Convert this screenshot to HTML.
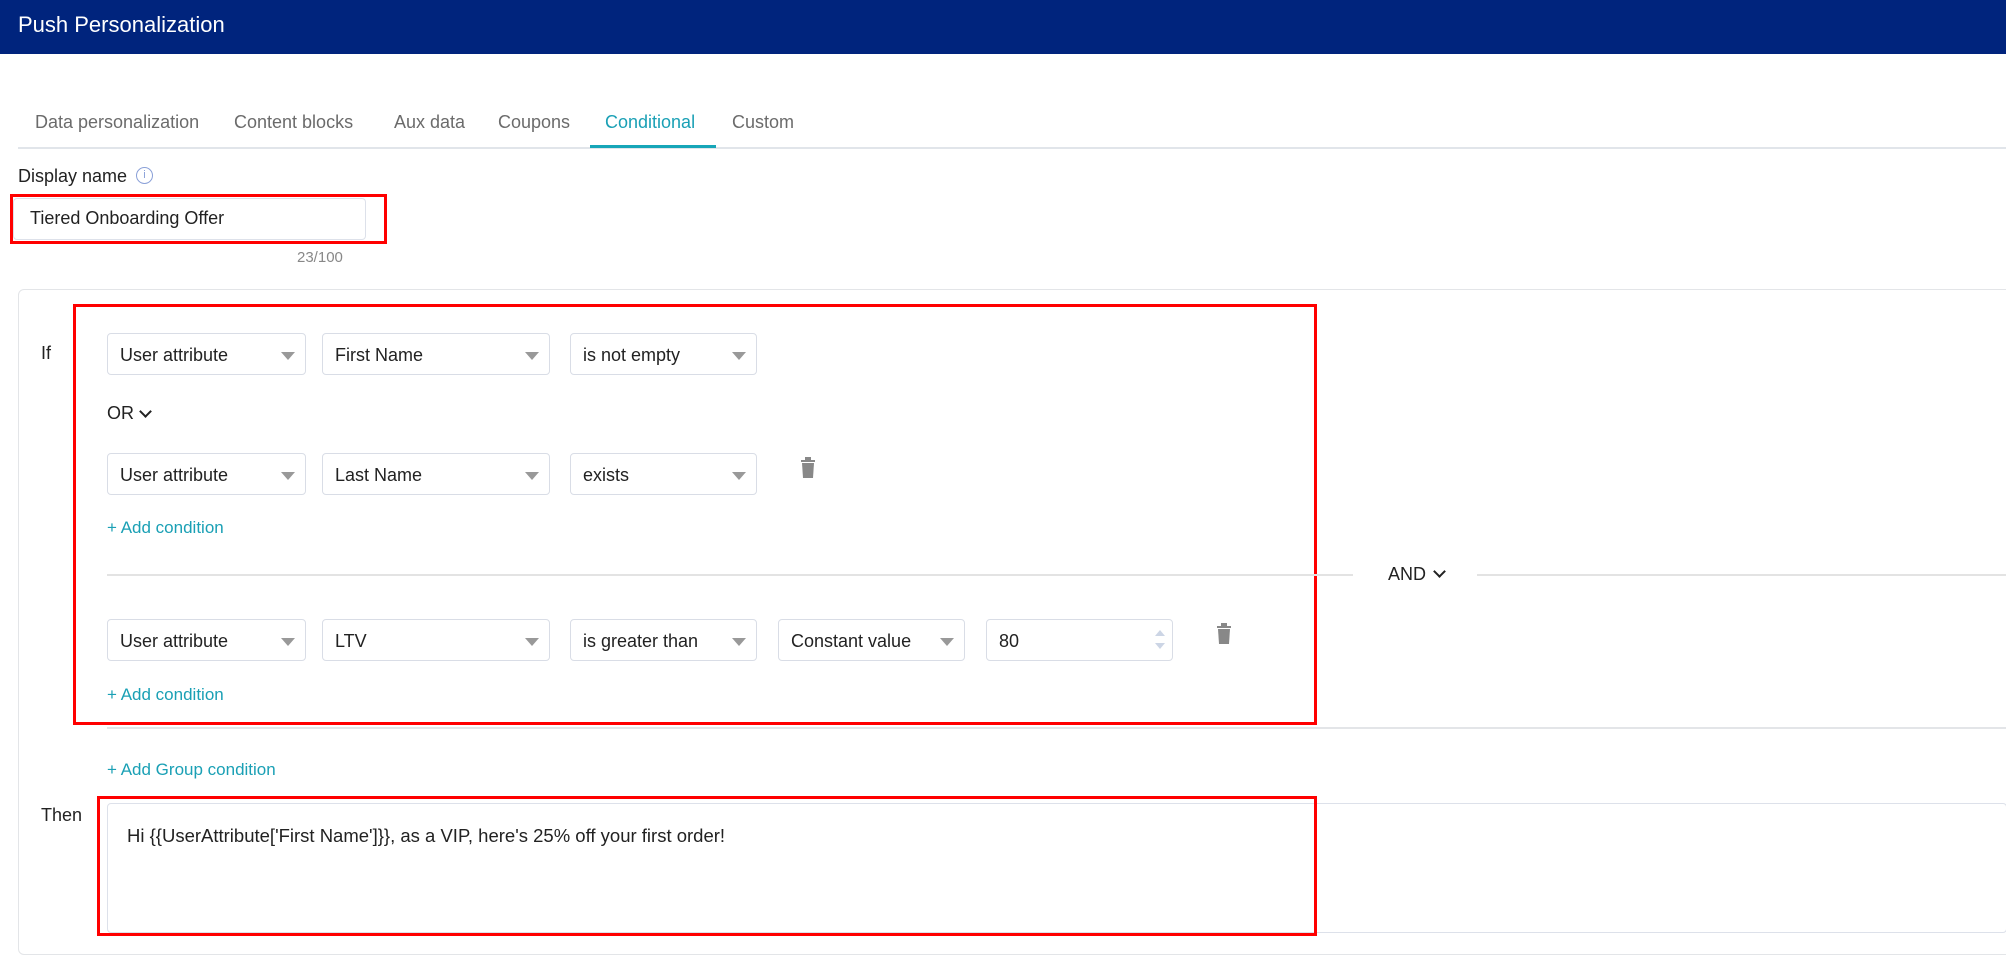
<!DOCTYPE html>
<html><head><meta charset="utf-8"><style>
*{box-sizing:border-box;margin:0;padding:0}
body{width:2006px;height:962px;background:#fff;font-family:"Liberation Sans",sans-serif;position:relative;overflow:hidden;color:#222}
.a{position:absolute}
.hdr{left:0;top:0;width:2006px;height:54px;background:#00247d;color:#fff;font-size:22px;padding:12px 0 0 18px}
.tab{top:112px;font-size:18px;color:#6b6b6b}
.sel{position:absolute;height:42px;border:1px solid #d9dde6;border-radius:4px;font-size:18px;padding:11px 0 0 12px;color:#222;background:#fff}
.sel:after{content:"";position:absolute;right:10px;top:18px;border-left:7px solid transparent;border-right:7px solid transparent;border-top:8px solid #999}
.num:after{display:none}
.red{border:3px solid #f00}
.link{color:#1aa0b5;font-size:17px}
</style></head><body>
<div class="a hdr">Push Personalization</div>
<div class="a tab" style="left:35px">Data personalization</div>
<div class="a tab" style="left:234px">Content blocks</div>
<div class="a tab" style="left:394px">Aux data</div>
<div class="a tab" style="left:498px">Coupons</div>
<div class="a tab" style="left:605px;color:#1aa0b5">Conditional</div>
<div class="a tab" style="left:732px">Custom</div>
<div class="a" style="left:18px;top:147px;width:1988px;height:2px;background:#e1e5ea"></div>
<div class="a" style="left:590px;top:145px;width:126px;height:3px;background:#17a6b8"></div>
<div class="a" style="left:18px;top:166px;font-size:18px">Display name</div>
<div class="a" style="left:136px;top:167px;width:17px;height:17px;border:1px solid #8aa0d8;border-radius:50%;color:#8aa0d8;font-size:11px;text-align:center;line-height:15px">i</div>
<div class="a" style="left:13px;top:198px;width:353px;height:42px;border:1px solid #dde1ea;border-radius:4px"></div>
<div class="a red" style="left:10px;top:194px;width:377px;height:50px"></div>
<div class="a" style="left:30px;top:208px;font-size:18px">Tiered Onboarding Offer</div>
<div class="a" style="left:297px;top:249px;font-size:15px;color:#888">23/100</div>
<div class="a" style="left:18px;top:289px;width:2000px;height:666px;border:1px solid #e3e5e8;border-radius:6px"></div>
<div class="a" style="left:41px;top:343px;font-size:18px">If</div>
<div class="a red" style="left:73px;top:304px;width:1244px;height:421px"></div>

<div class="sel" style="left:107px;top:333px;width:199px">User attribute</div>
<div class="sel" style="left:322px;top:333px;width:228px">First Name</div>
<div class="sel" style="left:570px;top:333px;width:187px">is not empty</div>
<div class="a" style="left:107px;top:403px;font-size:18px">OR</div>
<div class="a" style="left:141px;top:407px;width:9px;height:9px;border-right:2px solid #222;border-bottom:2px solid #222;transform:rotate(45deg)"></div>
<div class="sel" style="left:107px;top:453px;width:199px">User attribute</div>
<div class="sel" style="left:322px;top:453px;width:228px">Last Name</div>
<div class="sel" style="left:570px;top:453px;width:187px">exists</div>
<svg class="a" style="left:800px;top:457px" width="16" height="21" viewBox="0 0 16 21"><rect x="1" y="3" width="14" height="2" fill="#888"/><rect x="5" y="0" width="6" height="3" fill="#888"/><path d="M2 6h12l-1 15H3z" fill="#888"/></svg>
<div class="a link" style="left:107px;top:518px">+ Add condition</div>
<div class="a" style="left:107px;top:574px;width:1246px;height:2px;background:#e3e3e3"></div>
<div class="a" style="left:1477px;top:574px;width:529px;height:2px;background:#e3e3e3"></div>
<div class="a" style="left:1388px;top:564px;font-size:18px">AND</div>
<div class="a" style="left:1435px;top:567px;width:9px;height:9px;border-right:2px solid #222;border-bottom:2px solid #222;transform:rotate(45deg)"></div>

<div class="sel" style="left:107px;top:619px;width:199px">User attribute</div>
<div class="sel" style="left:322px;top:619px;width:228px">LTV</div>
<div class="sel" style="left:570px;top:619px;width:187px">is greater than</div>
<div class="sel" style="left:778px;top:619px;width:187px">Constant value</div>
<div class="sel num" style="left:986px;top:619px;width:187px">80</div>
<div class="a" style="left:1155px;top:630px;border-left:5px solid transparent;border-right:5px solid transparent;border-bottom:6px solid #ccd5e5"></div>
<div class="a" style="left:1155px;top:643px;border-left:5px solid transparent;border-right:5px solid transparent;border-top:6px solid #ccd5e5"></div>
<svg class="a" style="left:1216px;top:623px" width="16" height="21" viewBox="0 0 16 21"><rect x="1" y="3" width="14" height="2" fill="#888"/><rect x="5" y="0" width="6" height="3" fill="#888"/><path d="M2 6h12l-1 15H3z" fill="#888"/></svg>
<div class="a link" style="left:107px;top:685px">+ Add condition</div>
<div class="a" style="left:107px;top:727px;width:1899px;height:2px;background:#e3e5e8"></div>
<div class="a link" style="left:107px;top:760px">+ Add Group condition</div>
<div class="a" style="left:41px;top:805px;font-size:18px">Then</div>
<div class="a" style="left:107px;top:803px;width:1900px;height:130px;border:1px solid #dde1ea;border-radius:4px"></div>
<div class="a red" style="left:97px;top:796px;width:1220px;height:140px"></div>
<div class="a" style="left:127px;top:825px;font-size:18.5px">Hi {{UserAttribute['First Name']}}, as a VIP, here's 25% off your first order!</div>
</body></html>
